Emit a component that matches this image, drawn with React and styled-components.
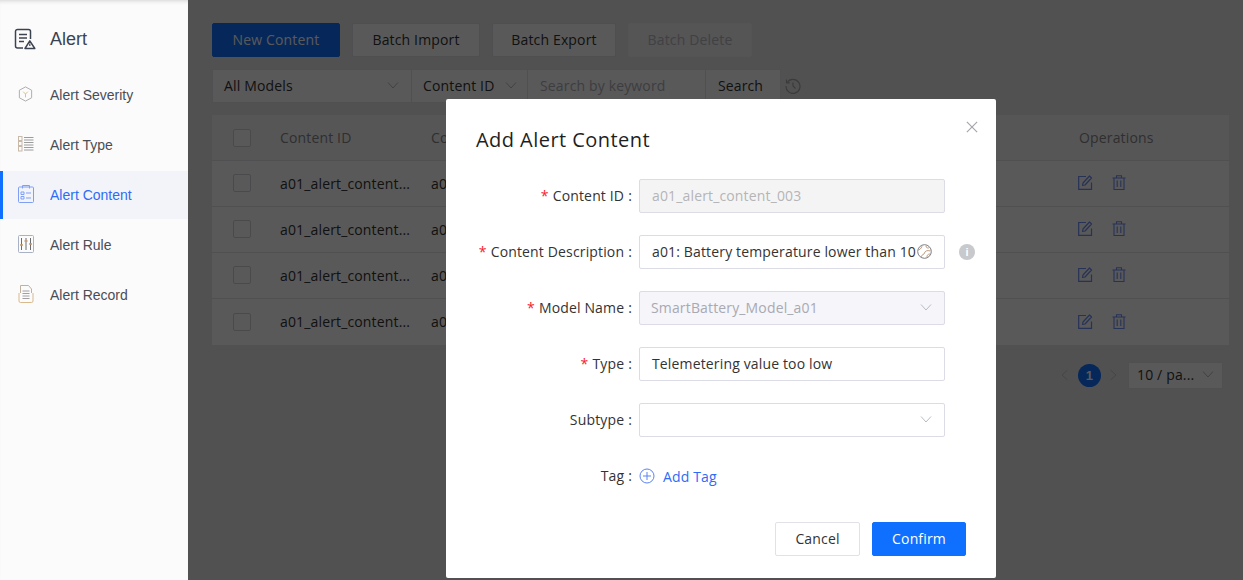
import React from "react";
import styled, { createGlobalStyle } from "styled-components";

const GlobalStyle = createGlobalStyle`
  html, body { margin: 0; padding: 0; height: 100%; overflow: hidden; }
  body { font-family: "Open Sans", "Noto Sans", sans-serif; font-size: 14px; letter-spacing: 0.15px; color: #333; }
  * { box-sizing: border-box; }
`;

const Chevron = ({ color = "#b9bcc4", dir = "down" }) => (
  <svg width="12" height="12" viewBox="0 0 12 12" fill="none" stroke={color} strokeWidth="1">
    {dir === "down" && <path d="M1 3.500 6 9l5-5.500" />}
    {dir === "left" && <path d="M8.500 1 3 6l5.500 5" />}
    {dir === "right" && <path d="M3.500 1 9 6l-5.500 5" />}
  </svg>
);

const AlertLogo = () => (
  <svg width="22" height="22" viewBox="0 0 22 22" fill="none" stroke="#3c4350" strokeWidth="1.500">
    <path d="M9 20H3.500A2 2 0 0 1 1.500 18V3.500A2 2 0 0 1 3.500 1.500h11a2 2 0 0 1 2 2V11" />
    <path d="M5 6.500h8M5 10h8M5 13.500h5" />
    <path d="M15.800 12.800 20.800 20.500H11Z" strokeLinejoin="round" />
    <path d="M15.800 15.500v2.600" strokeWidth="1.200" />
  </svg>
);

const SeverityIcon = () => (
  <svg width="18" height="18" viewBox="0 0 18 18" fill="none" stroke="#a9a9ad" strokeWidth="1">
    <path d="M9 1.500 15.500 5v8L9 16.500 2.500 13V5Z" />
    <path d="M6.500 6.500 9 9l2.500-2.500M9 9v3.500" stroke="#d9bd92" />
  </svg>
);

const TypeIcon = () => (
  <svg width="16" height="16" viewBox="0 0 16 16" fill="none" stroke="#9c9c9c" strokeWidth="1">
    <rect x="0.500" y="0.500" width="3.500" height="4" stroke="#c9b9a9" />
    <rect x="0.500" y="5.500" width="3.500" height="4" stroke="#c9b9a9" />
    <rect x="0.500" y="10.500" width="3.500" height="4.500" stroke="#c9b9a9" />
    <path d="M6 1.500h9.500M6 4h9.500M6 6.500h9.500M6 9h9.500M6 11.500h9.500M6 14h9.500" />
  </svg>
);

const ContentIcon = () => (
  <svg width="16" height="18" viewBox="0 0 16 18" fill="none" stroke="#7f9ff5" strokeWidth="1">
    <rect x="0.500" y="2" width="15" height="15.500" rx="1" />
    <path d="M4.500 3.500v-3h7v3M3 7h3v2.500H3ZM3 11.500h3V14H3ZM8 8h5M8 13h5" />
  </svg>
);

const RuleIcon = () => (
  <svg width="16" height="18" viewBox="0 0 16 18" fill="none" stroke="#8f8f95" strokeWidth="1">
    <rect x="0.500" y="0.500" width="15" height="17" rx="1" stroke="#a9b2c4" />
    <path d="M3.500 3v12M8 3v12M12.500 3v12" stroke="#6d6d70" />
    <path d="M2 10h3M6.500 6h3M11 9h3" stroke="#c89a6a" strokeWidth="1.500" />
  </svg>
);

const RecordIcon = () => (
  <svg width="16" height="18" viewBox="0 0 16 18" fill="none" stroke="#a0a0a0" strokeWidth="1">
    <path d="M2.500 8V.5h8l3 3.500v4" stroke="#c0b29c" />
    <path d="M1 8v8a1.500 1.500 0 0 0 1.500 1.500h11A1.500 1.500 0 0 0 15 16V8" stroke="#d8b98c" />
    <path d="M4.500 6h7M4.500 8.500h7M4.500 11h7M4.500 13.500h7" />
  </svg>
);

const HistoryIcon = () => (
  <svg width="16" height="16" viewBox="0 0 16 16" fill="none" stroke="#a8a8a8" strokeWidth="1.200">
    <path d="M2.200 4.500A7 7 0 1 1 1 8" />
    <path d="M1.500 1.500v3.300h3.300M8 4.500V8l2.500 2.500" />
  </svg>
);

const EditIcon = () => (
  <svg width="15" height="15" viewBox="0 0 15 15" fill="none" stroke="#6f8ff8" strokeWidth="1.200">
    <path d="M8 1.500H.7v12.800h12.800V7.500" />
    <path d="M4.500 10.500 5 8l6.500-7 2 2L7 10Z" strokeLinejoin="round" />
  </svg>
);

const TrashIcon = () => (
  <svg width="14" height="15" viewBox="0 0 14 15" fill="none" stroke="#6f8ff8" strokeWidth="1.100">
    <path d="M.5 3h13M4.500 3V.7h5V3M2 3v11.500h10V3M5.200 5.500v6.500M8.800 5.500v6.500" />
  </svg>
);

const GlobeBadge = () => (
  <svg width="15" height="15" viewBox="0 0 15 15" fill="none" stroke="#7b7b82" strokeWidth="1">
    <circle cx="7.500" cy="7.500" r="6.800" />
    <path d="M1.500 6C4 5 5 3 5 1.500M4 13c1-3 3-2 3.500-4S10 6 13.500 7M9 2c0 2 2 2.500 3.500 1.500M10 13c0-2 1-3 3-3" stroke="#c19a7c" />
  </svg>
);

const PlusCircle = () => (
  <svg width="16" height="16" viewBox="0 0 16 16" fill="none" stroke="#5b83f5" strokeWidth="1">
    <circle cx="8" cy="8" r="7" />
    <path d="M8 4v8M4 8h8" />
  </svg>
);

const Shell = styled.div`
  display: flex;
  width: 1243px;
  height: 580px;
  overflow: hidden;
`;

const Sidebar = styled.aside`
  width: 188px;
  flex-shrink: 0;
  background: #fbfbfb;
  box-shadow: inset 0 4px 4px -3px rgba(0, 0, 0, 0.16);
  font-family: "Liberation Sans", Arial, sans-serif;
  letter-spacing: 0;
`;

const SideHeader = styled.div`
  display: flex;
  align-items: center;
  gap: 14px;
  height: 70px;
  padding-left: 14px;
  padding-top: 8px;
  font-size: 18px;
  color: #3c4350;
`;

const SideItem = styled.div`
  display: flex;
  align-items: center;
  height: ${(p) => (p.$active ? "48px" : "50px")};
  margin: ${(p) => (p.$active ? "1px 0" : "0")};
  padding-left: ${(p) => (p.$active ? "14px" : "17px")};
  border-left: ${(p) => (p.$active ? "3px solid #0f6fff" : "0")};
  background: ${(p) => (p.$active ? "#f2f4fa" : "transparent")};
  color: ${(p) => (p.$active ? "#2f6bf6" : "#4a4d55")};
`;

const SideIcon = styled.span`
  display: flex;
  justify-content: center;
  width: 17px;
  margin-right: 16px;
  margin-bottom: 2px;
`;

const Main = styled.main`
  position: relative;
  flex: 1;
  padding: 23px 14px 0 24px;
  background: #e8e8ec;
`;

const Toolbar = styled.div`
  display: flex;
  gap: 12px;
`;

const Button = styled.button`
  height: 34px;
  width: ${(p) => p.$w}px;
  padding: 0 0 2px;
  border: 1px solid ${(p) => (p.$primary ? "#0f6fff" : p.$disabled ? "#f0f0f3" : "#e1e1e8")};
  border-radius: 2px;
  background: ${(p) => (p.$primary ? "#0f6fff" : p.$disabled ? "#f2f2f5" : "#fff")};
  color: ${(p) => (p.$primary ? "#fff" : p.$disabled ? "#b9b9c0" : "#333")};
  font: inherit;
  letter-spacing: inherit;
`;

const SearchRow = styled.div`
  display: flex;
  align-items: center;
  height: 34px;
  margin-top: 12px;
`;

const FilterCell = styled.div`
  display: flex;
  align-items: center;
  justify-content: space-between;
  width: ${(p) => p.$w}px;
  height: 34px;
  margin-left: -1px;
  padding: 0 ${(p) => p.$pr || 12}px 2px ${(p) => p.$pl || 12}px;
  border: 1px solid #e4e4ea;
  background: #fff;
  color: ${(p) => (p.$muted ? "#b0b0b8" : "#333")};
  &:first-child { margin-left: 0; }
`;

const SearchButton = styled(FilterCell)`
  justify-content: center;
  padding: 0 5px 2px 0;
`;

const HistoryWrap = styled.span`
  display: flex;
  margin-left: 4px;
`;

const Table = styled.div`
  width: 1017px;
  margin-top: 12px;
  background: #fff;
`;

const HeadRow = styled.div`
  display: grid;
  grid-template-columns: 68px 151px 648px 1fr;
  align-items: center;
  height: 46px;
  background: #f6f6f8;
  border-bottom: 1px solid #e6e6ea;
  color: #888;
`;

const Row = styled(HeadRow)`
  padding-bottom: 1px;
  background: #fff;
  color: #333;
  border-bottom: ${(p) => (p.$last ? "0" : "1px solid #e6e6ea")};
`;

const CheckCell = styled.span`
  justify-self: start;
  width: 18px;
  height: 18px;
  margin-left: 21px;
  border: 1px solid #d5d5dc;
  border-radius: 2px;
  background: #fff;
`;

const Ops = styled.span`
  display: flex;
  align-items: center;
  gap: 19px;
  margin: 0 0 1px -1px;
`;

const Pager = styled.div`
  display: flex;
  align-items: center;
  justify-content: flex-end;
  width: 1011px;
  height: 28px;
  margin-top: 16px;
`;

const PageNum = styled.span`
  display: flex;
  align-items: center;
  justify-content: center;
  width: 23px;
  height: 23px;
  margin: 0 6px 0 7px;
  border-radius: 50%;
  background: #0f6fff;
  color: #fff;
  font-family: "Liberation Sans", Arial, sans-serif;
  font-weight: 700;
  font-size: 13px;
`;

const PageSize = styled.span`
  display: flex;
  align-items: center;
  justify-content: space-between;
  width: 95px;
  height: 27px;
  margin-left: 9px;
  padding: 0 8px 2px;
  border: 1px solid #e4e4ea;
  background: #fff;
  color: #333;
`;

const Overlay = styled.div`
  position: absolute;
  inset: 0;
  padding: 99px 0 0 258px;
  background: rgba(0, 0, 0, 0.65);
`;

const Modal = styled.div`
  position: relative;
  width: 550px;
  height: 479px;
  padding: 27px 30px 0;
  background: #fff;
  border-radius: 2px;
`;

const Close = styled.span`
  position: absolute;
  top: 22px;
  right: 18px;
  display: flex;
`;

const Title = styled.h2`
  margin: 0 0 25px;
  height: 28px;
  font-size: 20px;
  line-height: 28px;
  font-weight: 400;
  letter-spacing: 0.45px;
  color: #1f1f1f;
`;

const FormRow = styled.div`
  display: grid;
  grid-template-columns: 163px 306px 1fr;
  align-items: center;
  height: 34px;
  margin-bottom: 22px;
`;

const Label = styled.label`
  justify-self: end;
  padding: 0 7px 2px 0;
  color: #333;
  white-space: nowrap;
`;

const Star = styled.span`
  margin-right: 4px;
  color: #f5222d;
`;

const Colon = styled.span`
  margin-left: 4px;
`;

const Field = styled.div`
  display: flex;
  align-items: center;
  justify-content: space-between;
  height: 34px;
  padding: 0 12px 2px ${(p) => p.$pl || 12}px;
  border: 1px solid #dcdce6;
  border-radius: 2px;
  background: ${(p) => p.$bg || "#fff"};
  color: ${(p) => p.$color || "#333"};
  white-space: nowrap;
`;

const InfoDot = styled.span`
  display: flex;
  align-items: center;
  justify-content: center;
  width: 16px;
  height: 16px;
  margin-left: 14px;
  border-radius: 50%;
  background: #c8c9cc;
  color: #fff;
  font: 700 11px "Liberation Sans", Arial, sans-serif;
`;

const AddTag = styled.span`
  display: flex;
  align-items: center;
  gap: 8px;
  color: #2f6bf6;
`;

const Footer = styled.div`
  display: flex;
  justify-content: flex-end;
  gap: 12px;
  margin-top: 29px;
`;

const navItems = [
  { label: "Alert Severity", icon: <SeverityIcon /> },
  { label: "Alert Type", icon: <TypeIcon /> },
  { label: "Alert Content", icon: <ContentIcon />, active: true },
  { label: "Alert Rule", icon: <RuleIcon /> },
  { label: "Alert Record", icon: <RecordIcon /> },
];

const rows = [0, 1, 2, 3];

export default function App() {
  return (
    <Shell>
      <GlobalStyle />
      <Sidebar>
        <SideHeader>
          <AlertLogo />
          Alert
        </SideHeader>
        {navItems.map((item) => (
          <SideItem key={item.label} $active={item.active}>
            <SideIcon>{item.icon}</SideIcon>
            {item.label}
          </SideItem>
        ))}
      </Sidebar>

      <Main>
        <Toolbar>
          <Button $primary $w={128}>New Content</Button>
          <Button $w={128}>Batch Import</Button>
          <Button $w={124}>Batch Export</Button>
          <Button $w={124} $disabled>Batch Delete</Button>
        </Toolbar>
        <SearchRow>
          <FilterCell $w={200} $pl={11}>All Models <Chevron /></FilterCell>
          <FilterCell $w={117} $pr={10} $pl={11}>Content ID <Chevron /></FilterCell>
          <FilterCell $w={179} $muted>Search by keyword</FilterCell>
          <SearchButton $w={76}>Search</SearchButton>
          <HistoryWrap><HistoryIcon /></HistoryWrap>
        </SearchRow>
        <Table>
          <HeadRow>
            <CheckCell />
            <span>Content ID</span>
            <span>Content Description</span>
            <span>Operations</span>
          </HeadRow>
          {rows.map((r) => (
            <Row key={r} $last={r === 3}>
              <CheckCell />
              <span>a01_alert_content...</span>
              <span>a01: Battery temperature</span>
              <Ops><EditIcon /><TrashIcon /></Ops>
            </Row>
          ))}
        </Table>
        <Pager>
          <Chevron dir="left" color="#c8c8d0" />
          <PageNum>1</PageNum>
          <Chevron dir="right" color="#c8c8d0" />
          <PageSize>10 / pa... <Chevron /></PageSize>
        </Pager>

        <Overlay>
          <Modal>
            <Close>
              <svg width="12" height="12" viewBox="0 0 14 14" fill="none" stroke="#a6a6ad" strokeWidth="1.400">
                <path d="M1 1l12 12M13 1 1 13" />
              </svg>
            </Close>
            <Title>Add Alert Content</Title>
            <FormRow>
              <Label><Star>*</Star>Content ID<Colon>:</Colon></Label>
              <Field $bg="#f4f4f5" $color="#b5b5b8">a01_alert_content_003</Field>
            </FormRow>
            <FormRow>
              <Label><Star>*</Star>Content Description<Colon>:</Colon></Label>
              <Field>
                a01: Battery temperature lower than 10
                <GlobeBadge />
              </Field>
              <InfoDot>i</InfoDot>
            </FormRow>
            <FormRow>
              <Label><Star>*</Star>Model Name<Colon>:</Colon></Label>
              <Field $bg="#f5f5fa" $color="#a9a9b2" $pl={11}>SmartBattery_Model_a01 <Chevron /></Field>
            </FormRow>
            <FormRow>
              <Label><Star>*</Star>Type<Colon>:</Colon></Label>
              <Field>Telemetering value too low</Field>
            </FormRow>
            <FormRow>
              <Label>Subtype<Colon>:</Colon></Label>
              <Field><span /><Chevron /></Field>
            </FormRow>
            <FormRow>
              <Label>Tag<Colon>:</Colon></Label>
              <AddTag><PlusCircle />Add Tag</AddTag>
            </FormRow>
            <Footer>
              <Button $w={85}>Cancel</Button>
              <Button $primary $w={94}>Confirm</Button>
            </Footer>
          </Modal>
        </Overlay>
      </Main>
    </Shell>
  );
}
